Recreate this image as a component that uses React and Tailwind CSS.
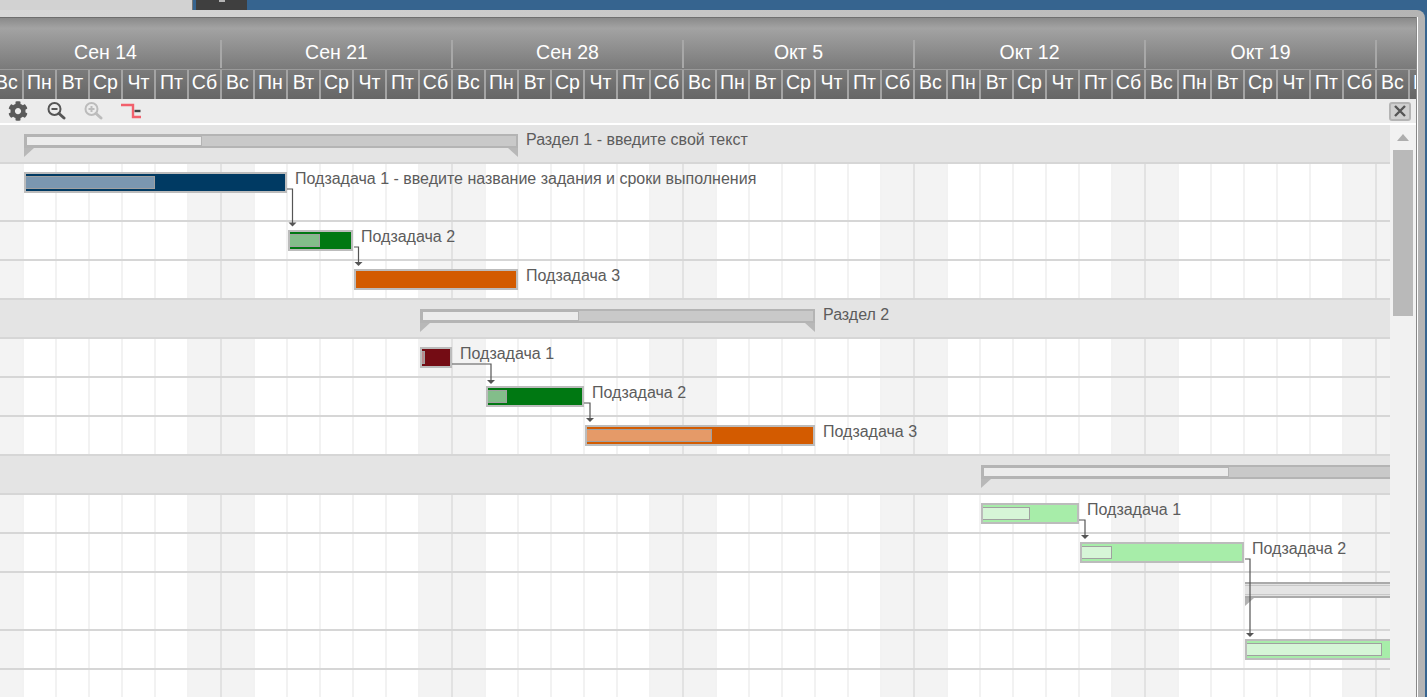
import React from "react";
import { FaCog } from "react-icons/fa";

const WEEKS = ["Сен 14", "Сен 21", "Сен 28", "Окт 5", "Окт 12", "Окт 19", "Окт 26"];
const DAYS = ["Вс", "Пн", "Вт", "Ср", "Чт", "Пт", "Сб"];
const TOTAL_DAYS = WEEKS.length * 7;

// x = left edge in px, w = bar width, p = progress width
const ROWS = [
  { section: true, x: 24, w: 494, p: 176, label: "Раздел 1 - введите свой текст" },
  { tall: true, x: 24, w: 263, p: 129, color: "#003a63", fill: "#7b97b0", label: "Подзадача 1 - введите название задания и сроки выполнения" },
  { x: 288, w: 65, p: 30, color: "#007812", fill: "#83bd8a", label: "Подзадача 2" },
  { x: 354, w: 164, p: 0, color: "#d35b00", fill: "#e59a68", label: "Подзадача 3" },
  { section: true, x: 420, w: 395, p: 157, label: "Раздел 2" },
  { x: 420, w: 32, p: 3, color: "#740c14", fill: "#b98a8d", label: "Подзадача 1" },
  { x: 486, w: 98, p: 19, color: "#007812", fill: "#83bd8a", label: "Подзадача 2" },
  { x: 585, w: 230, p: 125, color: "#d35b00", fill: "#e59a68", label: "Подзадача 3" },
  { section: true, x: 981, w: 460, p: 246 },
  { x: 981, w: 98, p: 47, color: "#a7eda9", fill: "#d6f5d7", label: "Подзадача 1" },
  { x: 1080, w: 164, p: 30, color: "#a7eda9", fill: "#d6f5d7", label: "Подзадача 2" },
  { tall: true, group: true, x: 1245, w: 300, p: 200 },
  { x: 1245, w: 300, p: 135, color: "#a7eda9", fill: "#d6f5d7" },
  { blank: true },
];

const LINKS = [
  "M287 189H292.5V223",
  "M354 247H358.5V262",
  "M452 364H491V380",
  "M584 403H590V418",
  "M1079 520H1085V535",
  "M1245 559H1250V633",
];

function SummaryBar({ row }) {
  return (
    <div className="absolute top-[9px]" style={{ left: row.x, width: row.w }}>
      <div className="h-[14px] border-2 border-[#b4b4b4] bg-[#c9c9c9]">
        <div className="h-[10px] border border-[#b4b4b4] bg-[#ececec]" style={{ width: row.p }} />
      </div>
      <div className="flex justify-between">
        <div className="h-[9px] w-[10px] bg-[#b8b8b8] [clip-path:polygon(0_0,100%_0,0_100%)]" />
        <div className="h-[9px] w-[10px] bg-[#b8b8b8] [clip-path:polygon(0_0,100%_0,100%_100%)]" />
      </div>
    </div>
  );
}

function GroupBar({ row }) {
  return (
    <div className="absolute top-[9px]" style={{ left: row.x, width: row.w }}>
      <div className="h-[16px] border-y-2 border-[#aaaaaa] bg-[#e2e2e2] pt-[1px]">
        <div className="h-[10px] border-y border-[#c8c8c8] bg-[#e4e4e4]" />
      </div>
      <div className="h-[8px] w-[9px] bg-[#b2b2b2] [clip-path:polygon(0_0,100%_0,0_100%)]" />
    </div>
  );
}

function TaskBar({ row }) {
  return (
    <div
      className="absolute top-[8px] h-[21px] border-2 border-[#bcbcbc] pt-[2px]"
      style={{ left: row.x, width: row.w, backgroundColor: row.color }}
    >
      {row.p > 0 && (
        <div
          className="h-[13px] border border-l-0 border-[#a0a0a0]"
          style={{ width: row.p, backgroundColor: row.fill }}
        />
      )}
    </div>
  );
}

function Row({ row }) {
  return (
    <div
      className={`relative border-b-2 border-[#d6d6d6] ${row.tall ? "h-[58px]" : "h-[39px]"} ${row.section ? "bg-[#e4e4e4]" : ""}`}
    >
      {row.section && <SummaryBar row={row} />}
      {row.group && <GroupBar row={row} />}
      {row.color && <TaskBar row={row} />}
      {row.label && (
        <span
          className="absolute top-[5px] whitespace-nowrap text-[16px] leading-[20px] text-[#5c5c5c]"
          style={{ left: row.x + row.w + 8 }}
        >
          {row.label}
        </span>
      )}
    </div>
  );
}

function ZoomIcon({ plus, color }) {
  return (
    <svg width="20" height="20" viewBox="0 0 20 20" fill="none" stroke={color} strokeWidth="2">
      <circle cx="8.5" cy="8" r="6" />
      <path d="M5.5 8H11.5" />
      {plus && <path d="M8.5 5V11" />}
      <path d="M13 12.5L18 17" strokeWidth="3" strokeLinecap="round" />
    </svg>
  );
}

function CriticalIcon() {
  return (
    <svg width="22" height="16" viewBox="0 0 22 16" fill="none" strokeWidth="2.4">
      <path d="M0 2H12V14H20" stroke="#f2606c" />
      <path d="M13.5 8H19.5" stroke="#444444" />
    </svg>
  );
}

export default function App() {
  return (
    <div className="h-[697px] w-[1427px] overflow-hidden bg-[#36648f] font-['Liberation_Sans',Arial,sans-serif]">
      {/* strip of the page behind the dialog */}
      <div className="flex h-[10px]">
        <div className="w-[193px] border-r border-[#777777] bg-[#d2d2d2]" />
        <div className="ml-[3px] w-[51px] bg-[#3f3f3f]">
          <div className="mx-auto h-[2px] w-[6px] bg-[#b5b5b5]" />
        </div>
      </div>

      {/* dialog frame */}
      <div className="h-[687px] w-[1425px] rounded-tr-[8px] bg-gradient-to-r from-[#d8d8d8] to-[#b4b4b4] pr-[9px] pt-[7px]">
        <div className="h-full w-[1416px] overflow-hidden bg-white shadow-[1px_0_0_#888888,2px_0_0_#ffffff]">
          {/* months */}
          <div className="h-[52px] overflow-hidden border-t border-[#6f6f6f] bg-gradient-to-b from-[#8a8a8a] via-[#a3a3a3] via-20% to-[#7a7a7a]">
            <div className="-ml-[9px] flex h-full w-max">
              {WEEKS.map((w) => (
                <div key={w} className="flex h-full w-[231px] shrink-0 flex-col justify-end">
                  <div className="mb-[1px] h-[28px] border-r-2 border-[#a8a8a8] text-center text-[19.5px] leading-[24px] text-white">
                    {w}
                  </div>
                </div>
              ))}
            </div>
          </div>

          {/* days */}
          <div className="h-[30px] overflow-hidden border-t border-[#9a9a9a] bg-gradient-to-b from-[#7b7b7b] to-[#666666]">
            <div className="-ml-[9px] flex h-full w-max">
              {Array.from({ length: TOTAL_DAYS }, (_, i) => (
                <div
                  key={i}
                  className="h-full w-[33px] shrink-0 border-r-2 border-[#a4a4a4] text-center text-[19.5px] leading-[25px] text-white"
                >
                  {DAYS[i % 7]}
                </div>
              ))}
            </div>
          </div>

          {/* toolbar */}
          <div className="flex h-[24px] items-center bg-[#ececec] pl-[8px] pr-[5px]">
            <FaCog className="text-[20px] text-[#5a5a5a]" />
            <div className="ml-[18px]">
              <ZoomIcon color="#555555" />
            </div>
            <div className="ml-[17px]">
              <ZoomIcon plus color="#bcbcbc" />
            </div>
            <div className="ml-[18px]">
              <CriticalIcon />
            </div>
            <div className="ml-auto flex h-[19px] w-[22px] items-center justify-center rounded-[3px] border-2 border-[#b4b4b4] bg-[#cfcfcf]">
              <svg width="12" height="12" viewBox="0 0 12 12" stroke="#555555" strokeWidth="2.4">
                <path d="M1 1L11 11M11 1L1 11" />
              </svg>
            </div>
          </div>

          <div className="h-[2px] bg-white" />

          {/* chart and scrollbar */}
          <div className="flex h-[572px]">
            <div className="relative h-full w-[1390px] overflow-hidden">
              <div className="absolute -left-[9px] top-0 flex h-full w-max">
                {Array.from({ length: TOTAL_DAYS }, (_, i) => (
                  <div
                    key={i}
                    className={`h-full w-[33px] shrink-0 border-r-2 ${i % 7 === 6 ? "border-[#e2e2e2]" : "border-[#f2f2f2]"} ${i % 7 === 0 || i % 7 === 6 ? "bg-[#f3f3f3]" : "bg-white"}`}
                  />
                ))}
              </div>
              <div className="relative">
                {ROWS.map((row, i) => (
                  <Row key={i} row={row} />
                ))}
              </div>
              <svg className="absolute left-0 -top-[125px]" width="1390" height="697" fill="none">
                {LINKS.map((d) => (
                  <path key={d} d={d} stroke="#555555" strokeWidth="1.2" />
                ))}
                <path d="M288.5 222.5H296.5L292.5 226.5Z M354.5 262H362.5L358.5 266Z M487 380H495L491 384Z M586 418H594L590 422Z M1081 535H1089L1085 539Z M1246 633H1254L1250 637Z" fill="#555555" />
              </svg>
            </div>
            <div className="flex w-[26px] flex-col items-center bg-[#f1f1f1] pt-[9px]">
              <div className="h-0 w-0 border-x-[6px] border-b-[7px] border-x-transparent border-b-[#aeaeae]" />
              <div className="mt-[9px] h-[166px] w-[20px] bg-[#b9b9b9]" />
            </div>
          </div>
        </div>
      </div>
    </div>
  );
}
